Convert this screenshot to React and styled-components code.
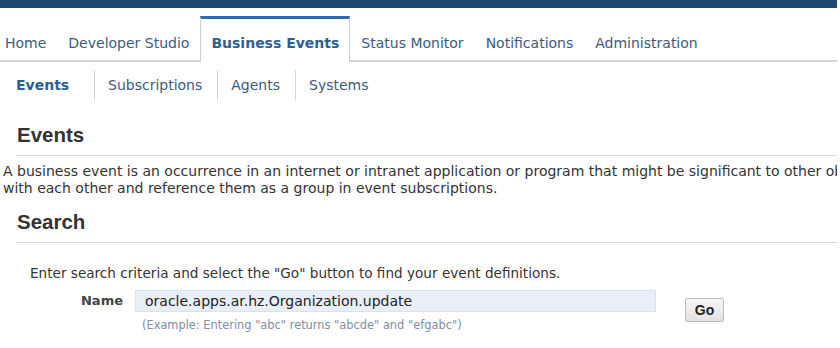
import styled, { createGlobalStyle } from 'styled-components';

const GlobalStyle = createGlobalStyle`
	html, body {
		margin: 0;
		padding: 0;
		background: #fff;
	}
	body {
		font-family: "DejaVu Sans", Verdana, sans-serif;
	}
`;

const Page = styled.div`
	width: 837px;
	overflow: hidden;
	background: #fff;
`;

const TopBar = styled.div`
	height: 8px;
	background: #1f4a6f;
`;

const TabBar = styled.nav`
	display: flex;
	align-items: flex-end;
	height: 52px;
	border-bottom: 2px solid #d6d6d6;
`;

const Tab = styled.a`
	box-sizing: border-box;
	height: ${({ $active }) => ($active ? '46px' : '44px')};
	margin-bottom: ${({ $active }) => ($active ? '-2px' : '0')};
	padding: 14px 10px 0;
	padding-left: ${({ $first }) => ($first ? '4px' : '10px')};
	border-top: 3px solid ${({ $active }) => ($active ? '#2d6cb0' : 'transparent')};
	border-left: 1px solid ${({ $active }) => ($active ? '#cfcfcf' : 'transparent')};
	border-right: 1px solid ${({ $active }) => ($active ? '#cfcfcf' : 'transparent')};
	background: #fff;
	font-size: 14px;
	line-height: 20px;
	font-weight: ${({ $active }) => ($active ? 'bold' : 'normal')};
	color: ${({ $active }) => ($active ? '#2e5f93' : '#3d5a7d')};
	white-space: nowrap;
	cursor: pointer;
`;

const SubNav = styled.div`
	display: flex;
	align-items: center;
	padding: 8px 0 0 2px;
	height: 30px;
`;

const SubTab = styled.a`
	display: flex;
	align-items: center;
	height: 30px;
	padding: 0 15px 0 13px;
	min-width: ${({ $width }) => $width || 'auto'};
	border-left: 1px solid ${({ $sep }) => ($sep ? '#d4d4d4' : 'transparent')};
	font-size: 14px;
	font-weight: ${({ $active }) => ($active ? 'bold' : 'normal')};
	color: ${({ $active }) => ($active ? '#2e5f93' : '#3d5a7d')};
	white-space: nowrap;
	cursor: pointer;
`;

const Heading = styled.h2`
	margin: ${({ $top }) => $top} 0 0 16px;
	padding: 0 0 8px 1px;
	border-bottom: 1px solid #d8d8d8;
	font-family: "Liberation Sans", Arial, sans-serif;
	font-size: 20.5px;
	line-height: 24px;
	font-weight: bold;
	color: #333;
`;

const Description = styled.p`
	margin: 7px 0 0 3px;
	font-size: 14px;
	line-height: 17px;
	color: #333;
	white-space: nowrap;
`;

const SearchBody = styled.div`
	padding: 22px 0 0 30px;
`;

const Hint = styled.p`
	margin: 0;
	font-size: 13.6px;
	line-height: 16px;
	color: #333;
`;

const FieldRow = styled.div`
	display: flex;
	align-items: flex-start;
	margin-top: 9px;
`;

const Label = styled.label`
	width: 105px;
	padding-right: 12px;
	box-sizing: border-box;
	text-align: right;
	font-size: 13px;
	line-height: 21px;
	font-weight: bold;
	color: #444;
`;

const FieldColumn = styled.div`
	display: flex;
	flex-direction: column;
`;

const Input = styled.input`
	box-sizing: border-box;
	width: 521px;
	height: 22px;
	margin: 0;
	padding: 0 9px;
	border: 1px solid #d9e3ef;
	background: #e9eff9;
	font-family: "DejaVu Sans", Verdana, sans-serif;
	font-size: 14px;
	color: #222;
	outline: none;
`;

const Example = styled.span`
	margin: 6px 0 0 7px;
	font-size: 11.4px;
	line-height: 14px;
	color: #7e8ea6;
	white-space: nowrap;
`;

const GoButton = styled.button`
	box-sizing: border-box;
	width: 39px;
	height: 24px;
	margin: 8px 0 0 29px;
	padding: 0;
	border: 1px solid #bdbdbd;
	border-radius: 2px;
	background: linear-gradient(#f7f7f7, #e2e2e2);
	font-family: "Liberation Sans", Arial, sans-serif;
	font-size: 14px;
	font-weight: bold;
	color: #222;
	cursor: pointer;
`;

const tabs = [
	'Home',
	'Developer Studio',
	'Business Events',
	'Status Monitor',
	'Notifications',
	'Administration',
];

const subTabs = ['Events', 'Subscriptions', 'Agents', 'Systems'];

export default function App() {
	return (
		<>
			<GlobalStyle />
			<Page>
				<TopBar />
				<TabBar>
					{tabs.map((t, i) => (
						<Tab key={t} $first={i === 0} $active={t === 'Business Events'}>
							{t}
						</Tab>
					))}
				</TabBar>
				<SubNav>
					{subTabs.map((t, i) => (
						<SubTab
							key={t}
							$sep={i > 0}
							$active={i === 0}
							$width={i === 0 ? '63px' : undefined}
						>
							{t}
						</SubTab>
					))}
				</SubNav>

				<Heading $top="23px">Events</Heading>
				<Description>
					A business event is an occurrence in an internet or intranet application or
					program that might be significant to other objects in a system or to external
					agents.
					<br />
					with each other and reference them as a group in event subscriptions.
				</Description>

				<Heading $top="13px">Search</Heading>
				<SearchBody>
					<Hint>
						Enter search criteria and select the "Go" button to find your event
						definitions.
					</Hint>
					<FieldRow>
						<Label htmlFor="event-name">Name</Label>
						<FieldColumn>
							<Input
								id="event-name"
								defaultValue="oracle.apps.ar.hz.Organization.update"
							/>
							<Example>
								(Example: Entering "abc" returns "abcde" and "efgabc")
							</Example>
						</FieldColumn>
						<GoButton>Go</GoButton>
					</FieldRow>
				</SearchBody>
			</Page>
		</>
	);
}
